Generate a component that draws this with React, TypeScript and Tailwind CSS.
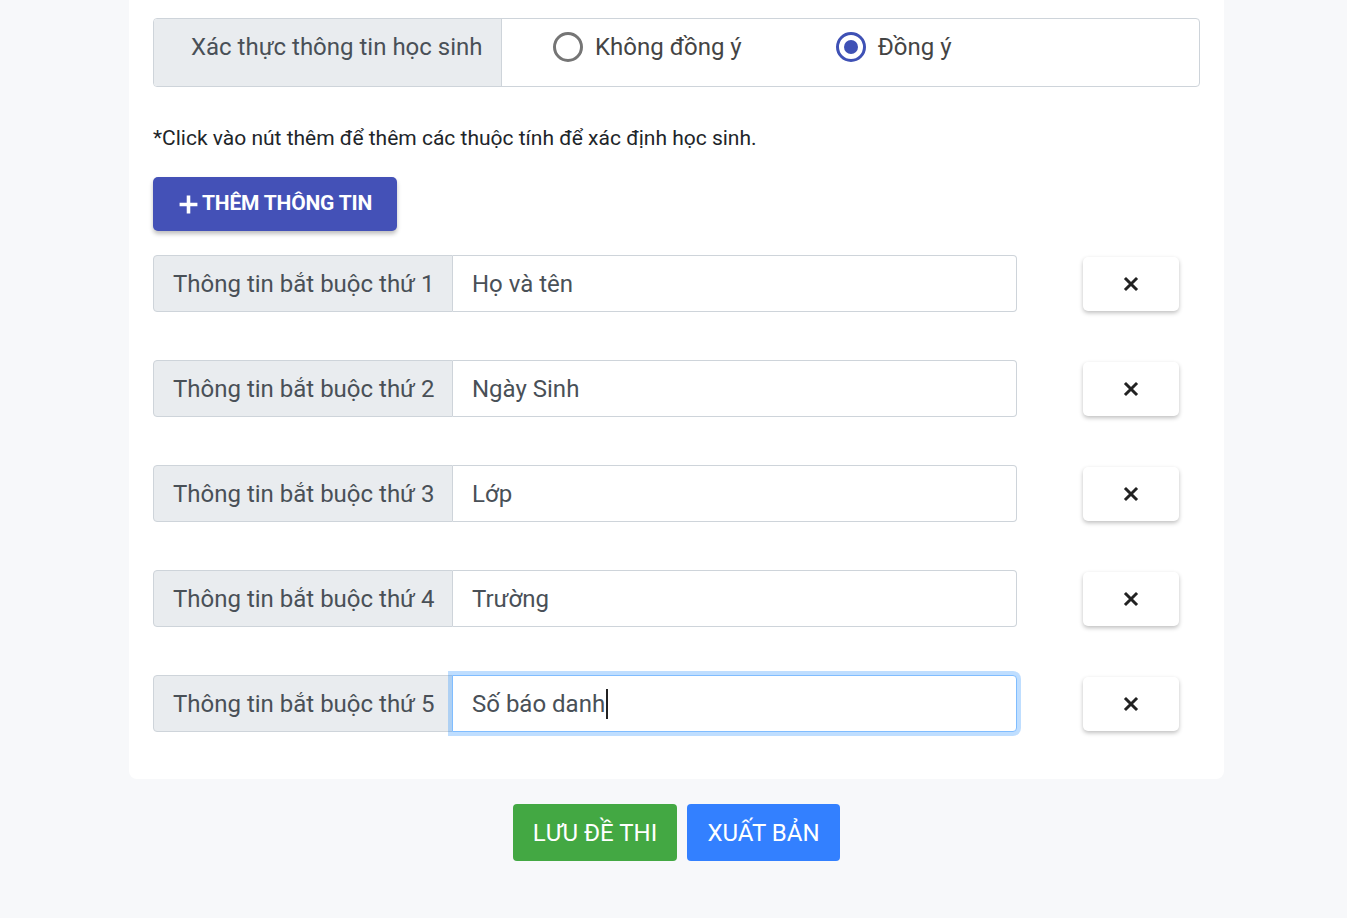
import React from "react";

const rows = ["Họ và tên", "Ngày Sinh", "Lớp", "Trường", "Số báo danh"];

function XIcon() {
  return (
    <svg width="16" height="16" viewBox="0 0 16 16">
      <path d="M3 3 L13 13 M13 3 L3 13" stroke="#222" strokeWidth="3" strokeLinecap="square" />
    </svg>
  );
}

export default function App() {
  return (
    <div
      className="min-h-[918px] bg-[#f7f8fa] flex flex-col"
      style={{ fontFamily: "Roboto, 'Noto Sans', sans-serif" }}
    >
      <div className="ml-[129px] w-[1095px] bg-white rounded-b-[8px] px-6 pt-[18px] pb-[47px]">
        <div className="flex h-[69px] w-[1047px] border border-[#ced4da] rounded-[4px] overflow-hidden">
          <div className="w-[348px] bg-[#e9ecef] border-r border-[#ced4da] flex items-center pb-[11px] pl-[37px] text-[24px] text-[#495057]">
            Xác thực thông tin học sinh
          </div>
          <div className="flex items-center pb-[11px] pl-[51px] text-[24px] text-[#444]">
            <div className="flex items-center gap-[12px]">
              <span className="w-[30px] h-[30px] rounded-full border-[3px] border-[#757575] box-border"></span>
              <span>Không đồng ý</span>
            </div>
            <div className="flex items-center gap-[12px] ml-[94px]">
              <span className="w-[30px] h-[30px] rounded-full border-[3px] border-[#3f51b5] box-border flex items-center justify-center">
                <span className="w-[14px] h-[14px] rounded-full bg-[#3f51b5]"></span>
              </span>
              <span>Đồng ý</span>
            </div>
          </div>
        </div>

        <p className="mt-[38px] text-[21px] leading-[26px] text-[#212529]">
          *Click vào nút thêm để thêm các thuộc tính để xác định học sinh.
        </p>

        <button className="mt-[26px] h-[54px] w-[244px] bg-[#4451b7] rounded-[5px] text-white font-bold text-[21px] flex items-center justify-center gap-[3px] shadow-[0_3px_4px_rgba(0,0,0,0.25)]">
          <svg width="21" height="21" viewBox="0 0 20 20">
            <path d="M10 1.5 V18.5 M1.5 10 H18.5" stroke="white" strokeWidth="3.4" />
          </svg>
          <span className="tracking-[-0.2px]">THÊM THÔNG TIN</span>
        </button>

        <div className="mt-[24px] flex flex-col gap-[48px]">
          {rows.map((v, i) => {
            const focused = i === rows.length - 1;
            return (
              <div key={i} className="flex items-center">
                <div className="flex w-[864px] h-[57px]">
                  <div className="w-[300px] h-full bg-[#e9ecef] border border-[#ced4da] rounded-l-[4px] flex items-center pl-[19px] text-[24px] text-[#495057]">
                    Thông tin bắt buộc thứ {i + 1}
                  </div>
                  <div
                    className={
                      focused
                        ? "flex-1 h-full border border-[#80bdff] rounded-r-[4px] flex items-center pl-[19px] text-[24px] text-[#495057] bg-white shadow-[0_0_0_4px_rgba(0,123,255,0.25)] -ml-px"
                        : "flex-1 h-full border border-[#ced4da] border-l-0 rounded-r-[4px] flex items-center pl-[19px] text-[24px] text-[#495057] bg-white"
                    }
                  >
                    {v}
                    {focused && <span className="inline-block w-[2px] h-[30px] bg-[#222] ml-[1px]"></span>}
                  </div>
                </div>
                <button className="ml-[66px] w-[96px] h-[54px] bg-white rounded-[5px] flex items-center justify-center shadow-[0_2px_4px_rgba(0,0,0,0.25)]">
                  <XIcon />
                </button>
              </div>
            );
          })}
        </div>
      </div>

      <div className="ml-[129px] w-[1095px] flex justify-center gap-[10px] mt-[25px]">
        <button className="h-[57px] w-[164px] bg-[#43a843] rounded-[4px] text-white text-[24px]">
          LƯU ĐỀ THI
        </button>
        <button className="h-[57px] w-[153px] bg-[#3380ff] rounded-[4px] text-white text-[24px]">
          XUẤT BẢN
        </button>
      </div>
    </div>
  );
}
